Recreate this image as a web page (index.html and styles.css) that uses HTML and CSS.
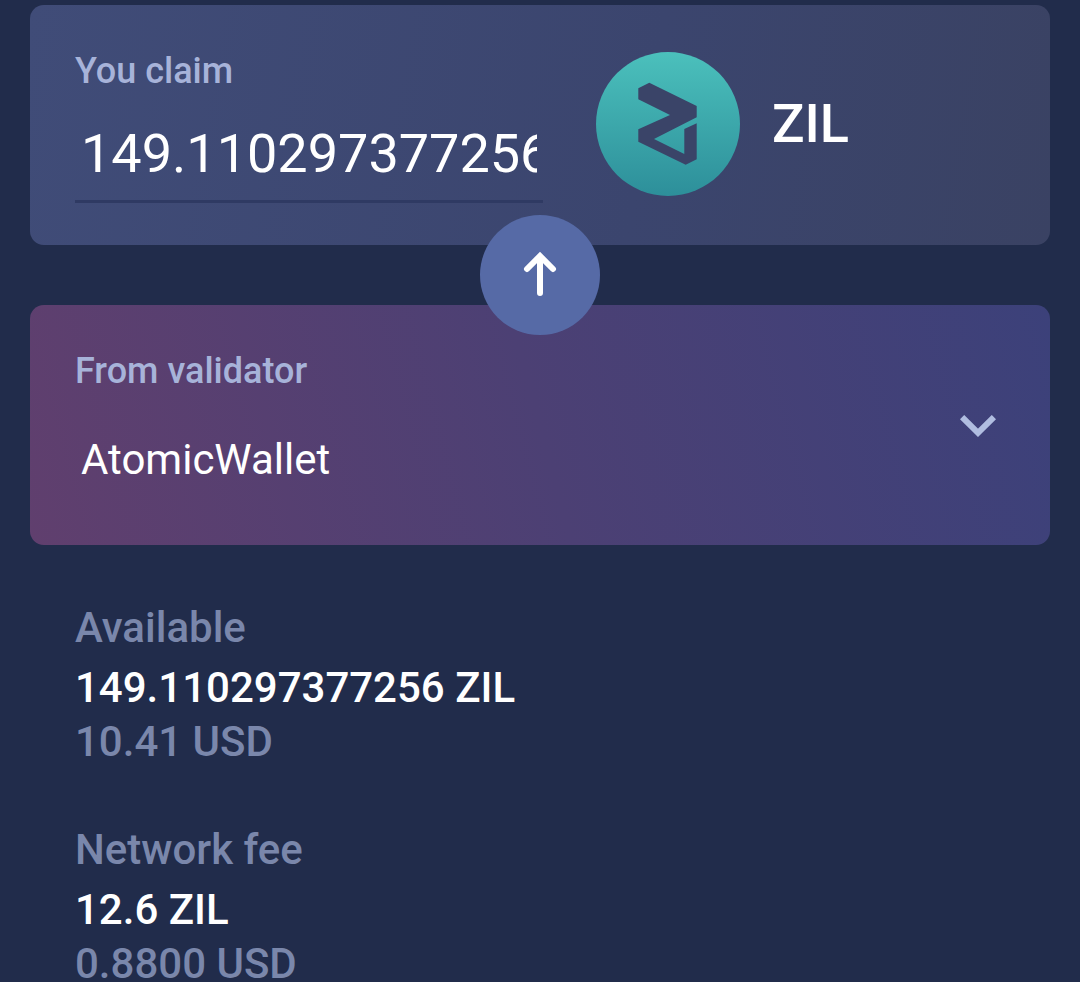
FILE: index.html
```html
<!DOCTYPE html>
<html lang="en">
<head>
<meta charset="utf-8">
<title>Claim ZIL</title>
<link rel="stylesheet" href="styles.css">
</head>
<body>
<main class="page">
  <div class="cards">
    <section class="card card-claim">
      <div class="field">
        <div class="card-label">You claim</div>
        <div class="amount-box"><div class="amount-text">149.110297377256</div></div>
      </div>
      <div class="coin">
        <svg class="coin-logo" viewBox="0 0 144 144" width="144" height="144" aria-hidden="true">
          <defs>
            <linearGradient id="zilgrad" x1="0" y1="0" x2="0" y2="1">
              <stop offset="0" stop-color="#4bc0bc"/>
              <stop offset="1" stop-color="#2d8f9a"/>
            </linearGradient>
          </defs>
          <circle cx="72" cy="72" r="72" fill="url(#zilgrad)"/>
          <path fill="#3a4468" d="M42.3 36.3 53.3 30.7 100.7 54V65.3L58 87 88.3 102V77L100.7 71.3V107.3L89.7 112.7 42.3 89.7V77.3L74 63 42.3 47.3Z"/>
        </svg>
        <span class="coin-name">ZIL</span>
      </div>
    </section>
    <button class="swap" type="button" aria-label="Swap">
      <svg viewBox="0 0 48 48" width="48" height="48" aria-hidden="true">
        <path d="M24 42V6M11 18 24 5 37 18" fill="none" stroke="#fff" stroke-width="6" stroke-linecap="round"/>
      </svg>
    </button>
    <section class="card card-validator">
      <div class="validator-main">
        <div class="card-label">From validator</div>
        <div class="validator-name">AtomicWallet</div>
      </div>
      <svg class="chevron" viewBox="0 0 36 22" width="36" height="22" aria-hidden="true">
        <path d="M2.100 2.100 18 17.800 33.900 2.100" fill="none" stroke="#b0bde0" stroke-width="6"/>
      </svg>
    </section>
  </div>
  <section class="stats">
    <div class="stat">
      <div class="stat-label">Available</div>
      <div class="stat-value">149.110297377256 ZIL</div>
      <div class="stat-fiat">10.41 USD</div>
    </div>
    <div class="stat">
      <div class="stat-label">Network fee</div>
      <div class="stat-value">12.6 ZIL</div>
      <div class="stat-fiat">0.8800 USD</div>
    </div>
  </section>
</main>
</body>
</html>
```
FILE: styles.css
```css
* { box-sizing: border-box; }
html, body { margin: 0; padding: 0; height: 100%; overflow: hidden; }
body { background: #212c4b; font-family: Roboto, "Liberation Sans", sans-serif; color: #fff; }
.page { padding: 5px 30px 0; }
.cards { position: relative; display: flex; flex-direction: column; gap: 60px; }
.card { height: 240px; border-radius: 14px; display: flex; }
.card-claim { background: linear-gradient(100deg, #404c78 0%, #3b456e 60%, #3a4263 100%); padding: 46px 0 0 45px; }
.card-validator { background: linear-gradient(75deg, #603f6e 0%, #4c4074 50%, #3c417a 100%); padding: 46px 54px 0 46px; justify-content: space-between; }
.field { width: 468px; }
.card-label { font-size: 36px; line-height: 41px; font-weight: 500; color: #a7b3d9; }
.amount-box { margin-top: 30px; padding: 0 6px; border-bottom: 3px solid #2f3a63; height: 81px; }
.amount-text { width: 100%; overflow: hidden; white-space: nowrap; font-size: 54px; line-height: 64px; }
.coin { display: flex; align-items: center; gap: 32px; margin: 1px 0 0 53px; height: 144px; }
.coin-logo { display: block; flex: none; }
.coin-name { font-size: 54px; font-weight: 500; line-height: 64px; }
.swap { position: absolute; left: 450px; top: 210px; width: 120px; height: 120px; border: 0; border-radius: 50%; background: #566aa6; padding: 0; display: flex; align-items: center; justify-content: center; }
.validator-main { display: flex; flex-direction: column; margin-left: -1px; }
.validator-name { margin-top: 44px; padding-left: 6px; font-size: 42px; line-height: 47px; }
.chevron { margin-top: 64px; }
.stats { padding: 61px 0 0 45px; display: flex; flex-direction: column; gap: 64px; }
.stat-label { font-size: 42px; line-height: 44px; font-weight: 500; color: #7a87ab; }
.stat-value { margin-top: 14px; font-size: 42px; line-height: 47px; font-weight: 500; color: #fff; }
.stat-fiat { margin-top: 9px; font-size: 42px; line-height: 44px; font-weight: 500; color: #7a87ab; }
```
